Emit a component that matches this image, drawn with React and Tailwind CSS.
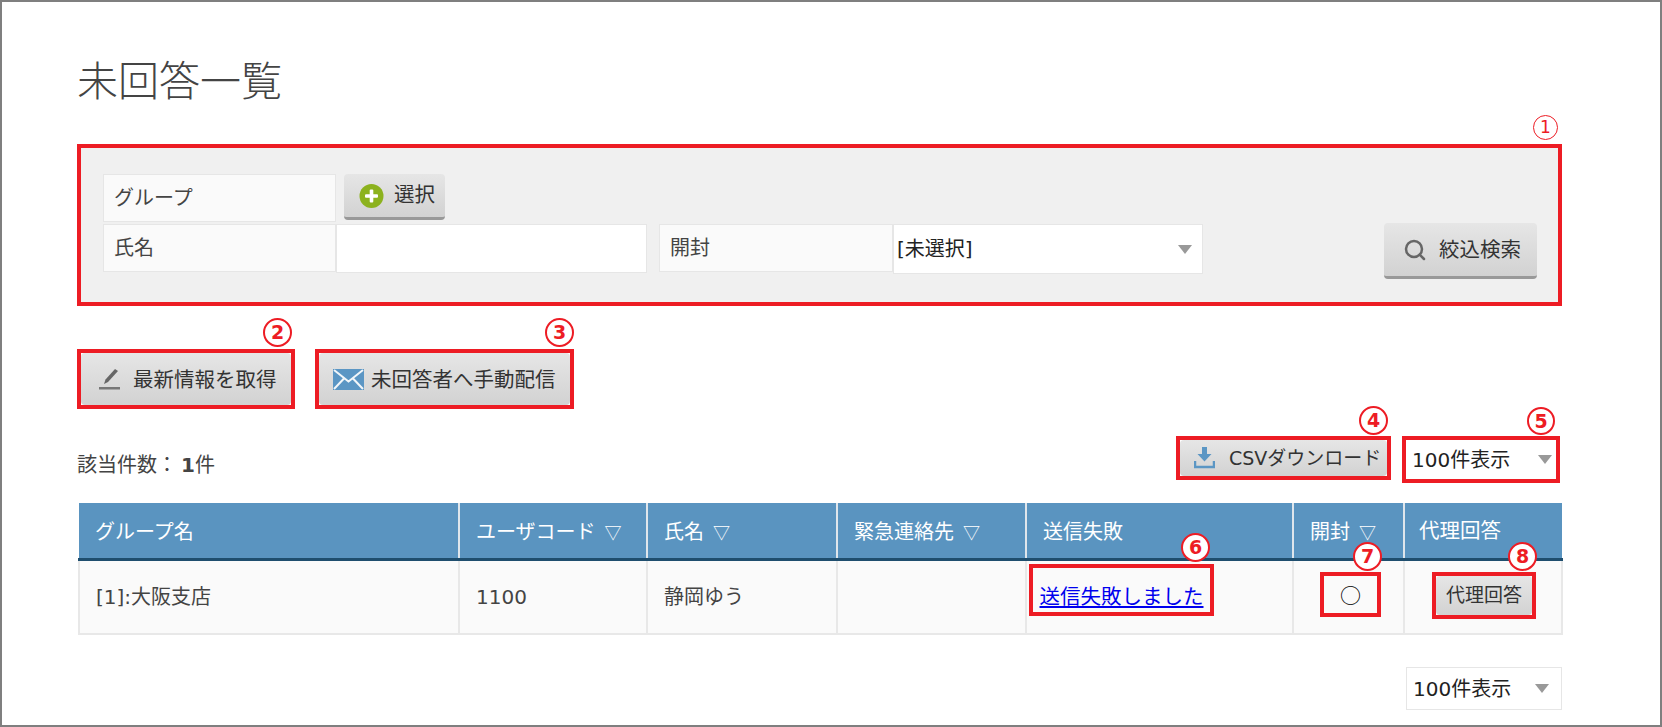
import React from "react";
import { Search } from "lucide-react";

const Circle = ({ n, className }) => (
  <span
    className={`absolute flex items-center justify-center rounded-full border-2 border-[#ed1c24] bg-white font-bold leading-none text-[#ed1c24] ${className}`}
  >
    {n}
  </span>
);

const Caret = ({ className = "" }) => (
  <svg width="14" height="9" viewBox="0 0 14 9" className={className}>
    <polygon points="0,0 14,0 7,9" fill="#999999" />
  </svg>
);

const GrayButton = ({ children, className = "" }) => (
  <button
    type="button"
    className={`flex items-center rounded-[4px] bg-gradient-to-b from-[#e6e6e6] to-[#d2d2d2] text-[20.5px] leading-none text-[#333333] ${className}`}
  >
    {children}
  </button>
);

const PageSelect = ({ className = "" }) => (
  <div className={`flex items-center justify-between bg-white text-[20px] text-[#222222] ${className}`}>
    <span>100件表示</span>
    <Caret />
  </div>
);

const PlusIcon = () => (
  <svg width="25" height="26" viewBox="0 0 25 26">
    <circle cx="12.5" cy="13" r="12" fill="#8cb21e" />
    <rect x="10.7" y="6.5" width="3.6" height="13" rx="1" fill="#ffffff" />
    <rect x="6" y="11.2" width="13" height="3.6" rx="1" fill="#ffffff" />
  </svg>
);

const PenIcon = () => (
  <svg width="22" height="22" viewBox="0 0 22 22">
    <path d="M16 1 L19 3 L9 14 L5 16 L6.5 11.5 Z" fill="#666666" />
    <rect x="0" y="19" width="21" height="2.5" fill="#777777" />
  </svg>
);

const MailIcon = () => (
  <svg width="31" height="21" viewBox="0 0 31 21">
    <rect width="31" height="21" fill="#5b96c4" />
    <path d="M1 1 L15.5 12.5 L30 1 M1 20 L11 9.5 M30 20 L20 9.5" fill="none" stroke="#f2f6f9" strokeWidth="2" />
  </svg>
);

const DownloadIcon = () => (
  <svg width="21" height="22" viewBox="0 0 21 22">
    <path d="M8 0 H13 V7 H17.5 L10.5 14.5 L3.5 7 H8 Z" fill="#5b96c4" />
    <path d="M1 14 V20 H20 V14" fill="none" stroke="#5b96c4" strokeWidth="2.5" />
  </svg>
);

const Sort = () => (
  <span className="ml-[9px] text-[17px] font-normal [font-family:'Noto_Sans_CJK_JP']">▽</span>
);

const thClass = "border-r-2 border-[#dfe6ec] pl-[16px] pt-[3px] text-left text-[20px] font-normal text-white last:border-r-0";
const tdClass = "border-2 border-[#e8e8e8] text-[20px] text-[#444444]";

export default function App() {
  return (
    <div
      className="h-[727px] w-[1662px] overflow-hidden border-2 border-[#7f7f7f] bg-white pl-[75px] pt-[52px]"
      style={{ fontFamily: '"DejaVu Sans", "Noto Sans CJK JP", sans-serif' }}
    >
      <h1 className="text-[41px] font-light leading-[56px] text-[#444444]">未回答一覧</h1>

      {/* search panel */}
      <div className="relative mt-[34px] flex h-[162px] w-[1485px] items-start justify-between border-4 border-[#ed1c24] bg-[#f0f0f0] pl-[22px] pr-[21px] pt-[26px]">
        <Circle n="1" className="right-0 top-[-33px] h-[25px] w-[25px] border-[1.5px] text-[17px] font-normal" />
        <div className="flex flex-col gap-[2px] text-[20px] text-[#444444]">
          <div className="flex items-start">
            <div className="flex h-[48px] w-[233px] items-center border border-[#e6e6e6] bg-[#fafafa] pl-[10px]">グループ</div>
            <GrayButton className="ml-[8px] h-[46px] w-[101px] gap-[10px] border-b-[3px] border-[#999999] pl-[15px]">
              <PlusIcon />
              <span>選択</span>
            </GrayButton>
          </div>
          <div className="flex items-start">
            <div className="flex h-[48px] w-[233px] items-center border border-[#e6e6e6] bg-[#fafafa] pl-[10px]">氏名</div>
            <input className="h-[49px] w-[311px] border border-[#e6e6e6] bg-white outline-none" aria-label="氏名" />
            <div className="ml-[12px] flex h-[48px] w-[234px] items-center border border-[#e6e6e6] bg-[#fafafa] pl-[10px]">開封</div>
            <div className="flex h-[50px] w-[310px] items-center justify-between border border-[#e6e6e6] bg-white pl-[3px] pr-[10px] text-[#222222]">
              <span>[未選択]</span>
              <Caret />
            </div>
          </div>
        </div>
        <GrayButton className="mt-[49px] h-[56px] w-[153px] gap-[12px] border-b-[3px] border-[#999999] pl-[19px]">
          <Search size={24} strokeWidth={2.5} className="text-[#666666]" />
          <span className="pt-[1px]">絞込検索</span>
        </GrayButton>
      </div>

      {/* action buttons */}
      <div className="mt-[43px] flex gap-[20px]">
        <div className="relative h-[60px] w-[218px] border-4 border-[#ed1c24]">
          <Circle n="2" className="right-[-1px] top-[-35px] h-[29px] w-[29px] text-[19px]" />
          <GrayButton className="h-full w-full gap-[12px] pl-[18px]">
            <PenIcon />
            <span className="pt-[3px]">最新情報を取得</span>
          </GrayButton>
        </div>
        <div className="relative h-[60px] w-[259px] border-4 border-[#ed1c24]">
          <Circle n="3" className="right-[-4px] top-[-35px] h-[29px] w-[29px] text-[19px]" />
          <GrayButton className="h-full w-full gap-[7px] pl-[14px]">
            <MailIcon />
            <span className="pt-[3px]">未回答者へ手動配信</span>
          </GrayButton>
        </div>
      </div>

      {/* result count */}
      <div className="mt-[27px] flex h-[47px] w-[1483px] items-start justify-between">
        <p className="pt-[14px] text-[20px] leading-[30px] text-[#444444]">
          該当件数：<b className="ml-[4px]">1</b>件
        </p>
        <div className="flex gap-[11px]">
          <div className="relative h-[44px] w-[215px] border-4 border-[#ed1c24]">
            <Circle n="4" className="right-[-1px] top-[-34px] h-[29px] w-[29px] text-[19px]" />
            <GrayButton className="h-full w-full gap-[14px] pl-[14px] !text-[19px]">
              <DownloadIcon />
              <span>CSVダウンロード</span>
            </GrayButton>
          </div>
          <div className="relative h-[47px] w-[158px] border-4 border-[#ed1c24]">
            <Circle n="5" className="right-[1px] top-[-33px] h-[28px] w-[28px] text-[19px]" />
            <PageSelect className="h-full pl-[6px] pr-[4px]" />
          </div>
        </div>
      </div>

      {/* results table */}
      <table className="ml-[1px] mt-[20px] w-[1483px] table-fixed border-collapse">
        <colgroup>
          <col className="w-[380px]" />
          <col className="w-[188px]" />
          <col className="w-[190px]" />
          <col className="w-[189px]" />
          <col className="w-[267px]" />
          <col className="w-[111px]" />
          <col className="w-[158px]" />
        </colgroup>
        <thead>
          <tr className="h-[56px] border-b-[3px] border-[#1f4e6e] bg-[#5a94c0]">
            <th className={thClass}>グループ名</th>
            <th className={thClass}>ユーザコード<Sort /></th>
            <th className={thClass}>氏名<Sort /></th>
            <th className={thClass}>緊急連絡先<Sort /></th>
            <th className={thClass}>送信失敗</th>
            <th className={thClass}>開封<Sort /></th>
            <th className={`${thClass} !pl-[14px] !text-[20.5px]`}>代理回答</th>
          </tr>
        </thead>
        <tbody>
          <tr className="h-[75px] bg-[#fafafa]">
            <td className={`${tdClass} pl-[16px]`}>[1]:大阪支店</td>
            <td className={`${tdClass} pl-[16px]`}>1100</td>
            <td className={`${tdClass} pl-[16px]`}>静岡ゆう</td>
            <td className={tdClass}></td>
            <td className={`${tdClass} pl-[2px] pt-[3px] align-top`}>
              <div className="relative flex h-[52px] w-[185px] items-center justify-center border-4 border-[#ed1c24] pt-[15px]">
                <Circle n="6" className="right-0 top-[-35px] h-[29px] w-[29px] text-[19px]" />
                <a href="#" className="text-[20.5px] leading-[26px] text-[#0000ee] underline">送信失敗しました</a>
              </div>
            </td>
            <td className={`${tdClass} pl-[26px] pt-[11px] align-top`}>
              <div className="relative flex h-[45px] w-[61px] items-center justify-center border-4 border-[#ed1c24]">
                <Circle n="7" className="right-[-5px] top-[-34px] h-[29px] w-[29px] text-[19px]" />
                <span className="text-[21px] leading-none text-black [font-family:'Noto_Sans_CJK_JP']">○</span>
              </div>
            </td>
            <td className={`${tdClass} pl-[27px] pt-[11px] align-top`}>
              <div className="relative h-[47px] w-[104px] border-4 border-[#ed1c24]">
                <Circle n="8" className="right-[-5px] top-[-34px] h-[29px] w-[29px] text-[19px]" />
                <GrayButton className="h-full w-full justify-center !text-[19px]">代理回答</GrayButton>
              </div>
            </td>
          </tr>
        </tbody>
      </table>

      <div className="mt-[32px] flex w-[1485px] justify-end">
        <PageSelect className="h-[43px] w-[156px] border-[1.5px] border-[#e6e6e6] pl-[6px] pr-[12px]" />
      </div>
    </div>
  );
}
